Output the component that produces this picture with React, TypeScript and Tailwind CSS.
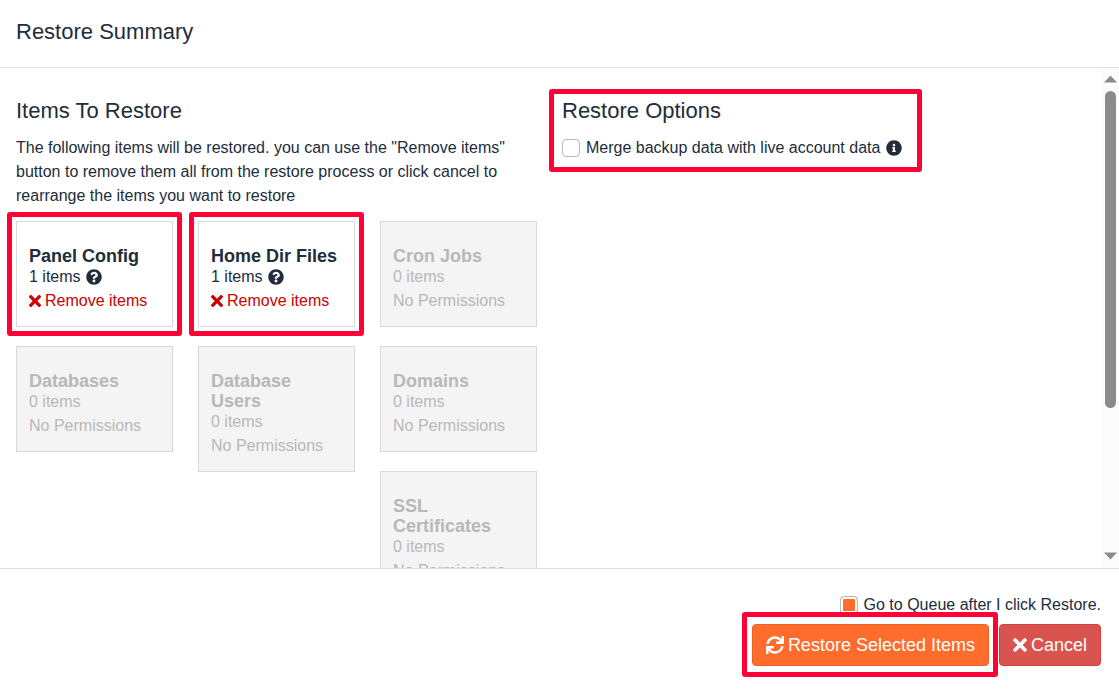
import { useState } from "react";
import {
  FaInfoCircle,
  FaQuestionCircle,
  FaSync,
  FaTimes,
} from "react-icons/fa";

type Item = { title: string; count: number };

const columns: Item[][] = [
  [
    { title: "Panel Config", count: 1 },
    { title: "Databases", count: 0 },
  ],
  [
    { title: "Home Dir Files", count: 1 },
    { title: "Database Users", count: 0 },
  ],
  [
    { title: "Cron Jobs", count: 0 },
    { title: "Domains", count: 0 },
    { title: "SSL Certificates", count: 0 },
  ],
];

function Highlight({ className }: { className: string }) {
  return (
    <span
      aria-hidden="true"
      className={`pointer-events-none absolute rounded-[3px] border-5 border-[#ff0037] ${className}`}
    />
  );
}

function ItemCard({ title, count }: Item) {
  const active = count > 0;
  return (
    <div
      className={`relative border border-[#d9d9d9] px-3 pt-6 pb-3 ${
        active ? "bg-white" : "bg-[#f4f4f4] text-[#b8b8b8]"
      }`}
    >
      <h3 className="text-[18px] leading-5 font-bold">{title}</h3>
      <div className="flex items-center gap-[5px] leading-[22px]">
        {count} items
        {active && <FaQuestionCircle className="size-4" />}
      </div>
      {active ? (
        <button type="button" className="flex items-center gap-1 leading-[26px] text-[#cc0000]">
          <FaTimes className="h-[18px] w-3" />
          Remove items
        </button>
      ) : (
        <div className="leading-[26px]">No Permissions</div>
      )}
      {active && <Highlight className="-inset-[10px]" />}
    </div>
  );
}

export default function App() {
  const [merge, setMerge] = useState(false);
  const [queue, setQueue] = useState(true);

  return (
    <div className="flex h-screen flex-col bg-white font-['Liberation_Sans',Arial,sans-serif] text-[16px] text-[#212d3a]">
      <header className="border-b border-[#dee2e6] px-4 pt-[18px] pb-[21px]">
        <h1 className="text-[22px] leading-7">Restore Summary</h1>
      </header>

      <main className="flex min-h-0 flex-1">
        <div className="grid min-w-0 flex-1 grid-cols-2 content-start gap-[25px] overflow-y-auto pt-[29px] pr-[18px] pb-6 pl-4 [scrollbar-width:none]">
          <section>
            <h2 className="text-[22px] leading-7">Items To Restore</h2>
            <p className="mt-[11px] leading-6">
              The following items will be restored. you can use the "Remove items" button to
              remove them all from the restore process or click cancel to rearrange the items you
              want to restore
            </p>
            <div className="mt-[13px] grid grid-cols-3 items-start gap-[25px]">
              {columns.map((column) => (
                <div key={column[0].title} className="flex flex-col gap-[19px]">
                  {column.map((item) => (
                    <ItemCard key={item.title} {...item} />
                  ))}
                </div>
              ))}
            </div>
          </section>

          <section>
            <div className="relative w-fit">
              <h2 className="text-[22px] leading-7">Restore Options</h2>
              <div className="mt-[11px] flex items-center leading-6">
                <label className="flex items-center gap-[6px]">
                  <input
                    type="checkbox"
                    checked={merge}
                    onChange={(e) => setMerge(e.target.checked)}
                    className="size-[18px] appearance-none rounded-[4px] border border-[#b5bbc1] bg-white checked:bg-[#ff6c2c] checked:shadow-[inset_0_0_0_2px_white]"
                  />
                  Merge backup data with live account data
                </label>
                <FaInfoCircle className="ml-[6px] size-4" />
              </div>
              <Highlight className="-top-2 -right-5 -bottom-3 -left-[13px]" />
            </div>
          </section>
        </div>

        <div aria-hidden="true" className="flex w-[18px] flex-col items-center bg-[#fcfcfc] pt-[7px] pb-2">
          <svg viewBox="0 0 13 8" className="h-2 w-[13px] fill-[#8b8b8b]">
            <path d="M6.5 0.5 13 7.5H0z" />
          </svg>
          <div className="my-2 flex w-[11px] flex-1 flex-col">
            <div className="h-[70%] rounded-full bg-[#8b8b8b]" />
          </div>
          <svg viewBox="0 0 13 8" className="h-2 w-[13px] fill-[#8b8b8b]">
            <path d="M6.5 7.5 13 0.5H0z" />
          </svg>
        </div>
      </main>

      <footer className="flex flex-col items-end border-t border-[#dee2e6] px-[18px] pt-6 pb-6">
        <label className="flex items-center gap-[6px] leading-6">
          <input
            type="checkbox"
            checked={queue}
            onChange={(e) => setQueue(e.target.checked)}
            className="size-[18px] appearance-none rounded-[4px] border border-[#b5bbc1] bg-white checked:bg-[#ff6c2c] checked:shadow-[inset_0_0_0_2px_white]"
          />
          Go to Queue after I click Restore.
        </label>
        <div className="mt-[7px] flex gap-[10px]">
          <div className="relative">
            <button
              type="button"
              className="flex h-[42px] items-center gap-1 rounded-[4px] border border-[#e96323] bg-[#ff6c2c] px-[13px] text-[18px] text-white"
            >
              <FaSync className="size-[18px]" />
              Restore Selected Items
            </button>
            <Highlight className="-top-3 -right-[9px] -bottom-[11px] -left-[10px]" />
          </div>
          <button
            type="button"
            className="flex h-[42px] items-center gap-1 rounded-[4px] border border-[#d43f3a] bg-[#d9534f] px-[13px] text-[18px] text-white"
          >
            <FaTimes className="h-5 w-[14px]" />
            Cancel
          </button>
        </div>
      </footer>
    </div>
  );
}
